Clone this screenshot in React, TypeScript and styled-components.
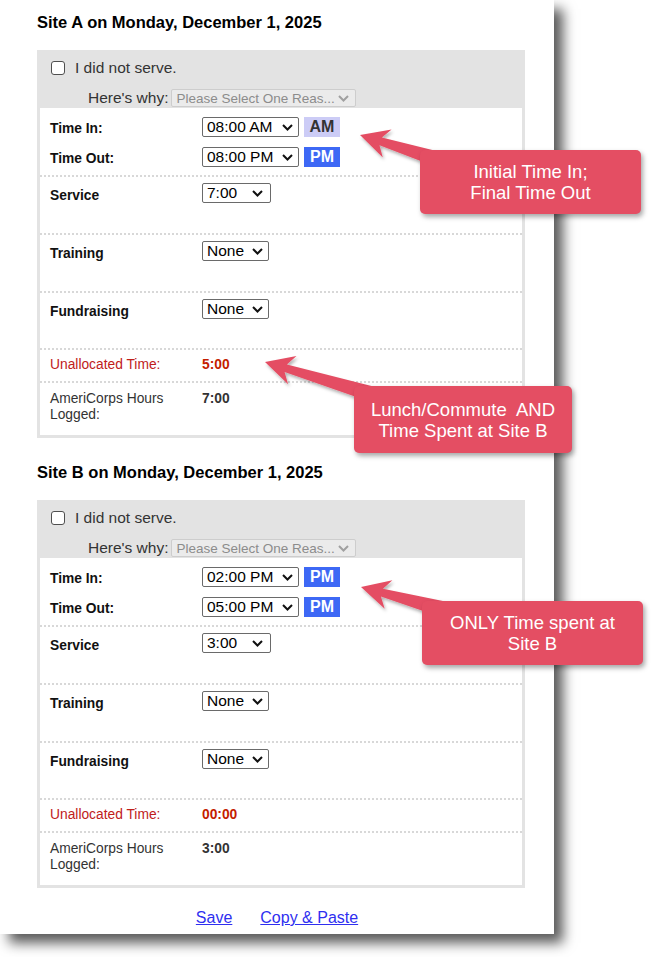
import styled, { createGlobalStyle } from "styled-components";

const GlobalStyle = createGlobalStyle`
  body {
    margin: 0;
    background: #fff;
    font-family: "Liberation Sans", Arial, sans-serif;
  }
`;

type Pt = [number, number];

interface SiteInfo {
  name: string;
  timeIn: string;
  inMer: "AM" | "PM";
  timeOut: string;
  outMer: "AM" | "PM";
  service: string;
  unallocated: string;
  logged: string;
}

const sites: SiteInfo[] = [
  { name: "Site A", timeIn: "08:00 AM", inMer: "AM", timeOut: "08:00 PM", outMer: "PM", service: "7:00", unallocated: "5:00", logged: "7:00" },
  { name: "Site B", timeIn: "02:00 PM", inMer: "PM", timeOut: "05:00 PM", outMer: "PM", service: "3:00", unallocated: "00:00", logged: "3:00" },
];

const callouts = [
  { x: 420, y: 150, w: 221, h: 64, lines: ["Initial Time In;", "Final Time Out"], tip: [360, 135] as Pt, tail: [440, 160] as Pt },
  { x: 354, y: 386, w: 218, h: 67, lines: ["Lunch/Commute\u00a0 AND", "Time Spent at Site B"], tip: [265, 362] as Pt, tail: [378, 396] as Pt },
  { x: 422, y: 601, w: 221, h: 64, lines: ["ONLY Time spent at", "Site B"], tip: [361, 587] as Pt, tail: [442, 609] as Pt },
];

// arrow shape: notched head at the tip, shaft widening towards the callout
function arrowPoints(tip: Pt, tail: Pt) {
  const dx = tail[0] - tip[0];
  const dy = tail[1] - tip[1];
  const len = Math.hypot(dx, dy);
  const ux = dx / len, uy = dy / len;
  const px = -uy, py = ux;
  const at = (d: number, w: number) =>
    `${(tip[0] + ux * d + px * w).toFixed(1)},${(tip[1] + uy * d + py * w).toFixed(1)}`;
  const head = 28.5;
  return [
    at(0, 0),
    at(head, 14.7),
    at(head * 0.76, 4),
    at(len, 8),
    at(len, -8),
    at(head * 0.76, -4),
    at(head, -14.7),
  ].join(" ");
}

function Chevron({ color }: { color: string }) {
  return (
    <svg width="11" height="7" viewBox="0 0 11 7">
      <path d="M1 1 L5.5 5.5 L10 1" fill="none" stroke={color} strokeWidth="2" />
    </svg>
  );
}

function Site({ info, first }: { info: SiteInfo; first?: boolean }) {
  return (
    <StyledSite $first={first}>
      <Heading>{info.name} on Monday, December 1, 2025</Heading>
      <Card>
        <CardHead>
          <CheckRow>
            <Check type="checkbox" />
            <CheckText>I did not serve.</CheckText>
          </CheckRow>
          <WhyRow>
            <WhyText>Here's why:</WhyText>
            <ReasonSelect>
              <span>Please Select One Reas...</span>
              <Chevron color="#a0a0a0" />
            </ReasonSelect>
          </WhyRow>
        </CardHead>
        <Body>
          <TimeGroup>
            <TimeLine>
              <Label>Time In:</Label>
              <ValueCell>
                <SelectBox $w={97}>
                  <span>{info.timeIn}</span>
                  <Chevron color="#111" />
                </SelectBox>
                <Badge $pm={info.inMer === "PM"}>{info.inMer}</Badge>
              </ValueCell>
            </TimeLine>
            <TimeLine>
              <Label>Time Out:</Label>
              <ValueCell>
                <SelectBox $w={97}>
                  <span>{info.timeOut}</span>
                  <Chevron color="#111" />
                </SelectBox>
                <Badge $pm={info.outMer === "PM"}>{info.outMer}</Badge>
              </ValueCell>
            </TimeLine>
          </TimeGroup>
          <Row $pt={6} $pb={29}>
            <Label $drop>Service</Label>
            <ValueCell>
              <SelectBox $w={69} $gap>
                <span>{info.service}</span>
                <Chevron color="#111" />
              </SelectBox>
            </ValueCell>
          </Row>
          <Row $pt={6} $pb={29}>
            <Label $drop>Training</Label>
            <ValueCell>
              <SelectBox $w={67}>
                <span>None</span>
                <Chevron color="#111" />
              </SelectBox>
            </ValueCell>
          </Row>
          <Row $pt={6} $pb={28}>
            <Label $drop>Fundraising</Label>
            <ValueCell>
              <SelectBox $w={67}>
                <span>None</span>
                <Chevron color="#111" />
              </SelectBox>
            </ValueCell>
          </Row>
          <Row $pt={7} $pb={8}>
            <Label $plain $color="#c0201a">Unallocated Time:</Label>
            <Value $color="#c41d00">{info.unallocated}</Value>
          </Row>
          <Row $pt={8} $pb={12}>
            <Label $plain $color="#333">AmeriCorps Hours Logged:</Label>
            <Value $color="#333">{info.logged}</Value>
          </Row>
        </Body>
      </Card>
    </StyledSite>
  );
}

export default function App() {
  return (
    <Screen>
      <GlobalStyle />
      <Page>
        {sites.map((s, i) => (
          <Site key={s.name} info={s} first={i === 0} />
        ))}
        <Footer>
          <FooterLink href="#">Save</FooterLink>
          <FooterLink href="#">Copy &amp; Paste</FooterLink>
        </Footer>

        <Arrows viewBox="0 0 554 934">
          <defs>
            <filter id="arrowShadow" x="-20%" y="-20%" width="140%" height="160%">
              <feDropShadow dx="1.5" dy="2.5" stdDeviation="1.5" floodColor="#000" floodOpacity="0.3" />
            </filter>
          </defs>
          {callouts.map((c, i) => (
            <polygon key={i} points={arrowPoints(c.tip, c.tail)} fill="#e44e63" filter="url(#arrowShadow)" />
          ))}
        </Arrows>
        {callouts.map((c, i) => (
          <Callout key={i} $x={c.x} $y={c.y} $w={c.w} $h={c.h}>
            <div>
              {c.lines[0]}
              <br />
              {c.lines[1]}
            </div>
          </Callout>
        ))}
      </Page>
    </Screen>
  );
}

const Screen = styled.div`
  height: 957px;
  background: #fff;
`;

const Page = styled.div`
  position: relative;
  width: 554px;
  height: 934px;
  box-sizing: border-box;
  padding-top: 12px;
  background: #fff;
  box-shadow: 9px 9px 12px rgba(0, 0, 0, 0.65);
`;

const StyledSite = styled.section<{ $first?: boolean }>`
  margin: ${(p) => (p.$first ? "0" : "24px")} 0 0 37px;
`;

const Heading = styled.h2`
  margin: 0;
  font-size: 16.5px;
  font-weight: bold;
  line-height: 20px;
  color: #000;
`;

const Card = styled.div`
  margin-top: 18px;
  width: 488px;
  box-sizing: border-box;
  border: 3px solid #e3e3e3;
`;

const CardHead = styled.div`
  height: 55px;
  box-sizing: border-box;
  padding: 7px 0 0 11px;
  background: #e3e3e3;
`;

const CheckRow = styled.div`
  display: flex;
  align-items: center;
  height: 16px;
`;

const Check = styled.input`
  appearance: none;
  margin: 0;
  width: 14px;
  height: 14px;
  box-sizing: border-box;
  border: 1.5px solid #4f4f4f;
  border-radius: 3px;
  background: #fff;
`;

const CheckText = styled.span`
  margin-left: 10px;
  font-size: 15.5px;
  color: #333;
`;

const WhyRow = styled.div`
  display: flex;
  align-items: center;
  gap: 3px;
  height: 20px;
  margin-top: 12px;
  padding-left: 37px;
`;

const WhyText = styled.span`
  font-size: 15.5px;
  color: #333;
`;

const ReasonSelect = styled.div`
  display: flex;
  align-items: center;
  justify-content: space-between;
  width: 185px;
  height: 18px;
  box-sizing: border-box;
  padding: 0 6px 0 4px;
  border: 1px solid #cdcdcd;
  border-radius: 2px;
  background: #ebebeb;
  font-size: 13.5px;
  color: #8c8c8c;
`;

const Body = styled.div`
  background: #fff;
`;

const TimeGroup = styled.div`
  display: flex;
  flex-direction: column;
  gap: 10px;
  padding: 9px 0 8px;
`;

const TimeLine = styled.div`
  display: grid;
  grid-template-columns: 152px auto;
  align-items: start;
  height: 20px;
  padding-left: 10px;
`;

const Row = styled.div<{ $pt: number; $pb: number }>`
  display: grid;
  grid-template-columns: 152px auto;
  align-items: start;
  padding: ${(p) => p.$pt}px 0 ${(p) => p.$pb}px 10px;
  border-top: 2px dotted #d8d8d8;
`;

const Label = styled.div<{ $plain?: boolean; $drop?: boolean; $color?: string }>`
  font-size: 13.8px;
  line-height: 16px;
  font-weight: ${(p) => (p.$plain ? "normal" : "bold")};
  color: ${(p) => p.$color ?? "#111"};
  margin-top: ${(p) => (p.$plain ? "0" : p.$drop ? "5px" : "4px")};
  padding-right: 8px;
`;

const ValueCell = styled.div`
  display: flex;
  align-items: center;
  gap: 5px;
`;

const SelectBox = styled.div<{ $w: number; $gap?: boolean }>`
  display: flex;
  align-items: center;
  justify-content: space-between;
  width: ${(p) => p.$w}px;
  height: 20px;
  box-sizing: border-box;
  padding: 0 ${(p) => (p.$gap ? "7px" : "5px")} 0 4px;
  border: 1px solid #6a6a6a;
  border-radius: 2px;
  background: #fff;
  font-size: 15.5px;
  color: #000;
`;

const Badge = styled.span<{ $pm: boolean }>`
  display: flex;
  align-items: center;
  justify-content: center;
  width: 36px;
  height: 20px;
  font-size: 16px;
  font-weight: bold;
  background: ${(p) => (p.$pm ? "#3d68f5" : "#ccccf6")};
  color: ${(p) => (p.$pm ? "#fff" : "#333")};
`;

const Value = styled.div<{ $color: string }>`
  font-size: 13.8px;
  line-height: 16px;
  font-weight: bold;
  color: ${(p) => p.$color};
`;

const Footer = styled.div`
  display: flex;
  justify-content: center;
  gap: 28px;
  margin-top: 20px;
  line-height: 20px;
`;

const FooterLink = styled.a`
  font-size: 16px;
  color: #2f2ff0;
  text-decoration: underline;
`;

const Arrows = styled.svg`
  position: absolute;
  top: 0;
  left: 0;
  width: 554px;
  height: 934px;
  overflow: visible;
  pointer-events: none;
`;

const Callout = styled.div<{ $x: number; $y: number; $w: number; $h: number }>`
  position: absolute;
  left: ${(p) => p.$x}px;
  top: ${(p) => p.$y}px;
  width: ${(p) => p.$w}px;
  height: ${(p) => p.$h}px;
  display: flex;
  align-items: center;
  justify-content: center;
  text-align: center;
  background: #e44e63;
  border-radius: 5px;
  box-shadow: 2px 3px 5px rgba(0, 0, 0, 0.35);
  color: #fff;
  font-size: 18.5px;
  line-height: 21px;
`;
